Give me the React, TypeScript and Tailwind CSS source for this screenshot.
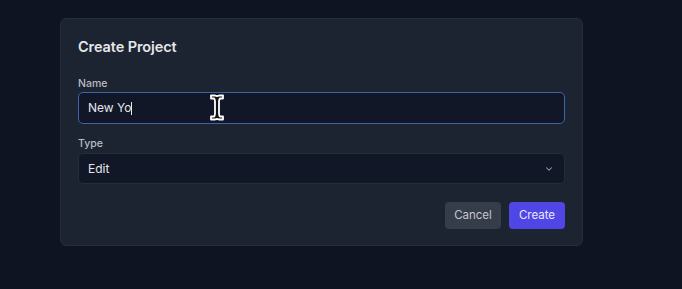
import React from "react";

export default function App() {
  return (
    <div className="w-[682px] h-[289px] bg-[#0e1421] overflow-hidden" style={{ fontFamily: "Inter, 'Noto Sans', sans-serif" }}>
      <div className="ml-[60px] mt-[18px] w-[523px] h-[228px] rounded-[6px] bg-[#1d2431] border border-[#262d3a] px-[17px] pt-[19px]">
        <h2 className="text-[14.5px] font-semibold text-[#e5e7eb] leading-[18px] tracking-[-0.1px]">Create Project</h2>
        <div className="mt-[21px]">
          <label className="block text-[10.5px] font-medium text-[#b7bcc6] leading-[13px]">Name</label>
          <div className="relative mt-[2px] h-[32px] rounded-[5px] border-[1.5px] border-[#4063a8] bg-[#111726] flex items-center pl-[9px]">
            <span className="text-[12px] text-[#e5e7eb]">New Yo</span>
            <span className="w-[1px] h-[13px] bg-[#e5e7eb]" />
            <svg className="absolute left-[130px] top-[0px]" width="16" height="29" viewBox="0 0 16 28">
              <path d="M2 2 H6 Q8 3 10 2 H14 V5 H11 Q10 6 10 8 V20 Q10 22 11 23 H14 V26 H10 Q8 25 6 26 H2 V23 H5 Q6 22 6 20 V8 Q6 6 5 5 H2 Z" fill="#111" stroke="#fff" strokeWidth="1.8" strokeLinejoin="round" />
            </svg>
          </div>
        </div>
        <div className="mt-[13px]">
          <label className="block text-[10.5px] font-medium text-[#b7bcc6] leading-[13px]">Type</label>
          <div className="mt-[3px] h-[31px] rounded-[5px] border border-[#252c3a] bg-[#111726] flex items-center justify-between pl-[9px] pr-[10px]">
            <span className="text-[12px] text-[#e5e7eb]">Edit</span>
            <svg width="10" height="10" viewBox="0 0 24 24" fill="none" stroke="#9ca3af" strokeWidth="2.5" strokeLinecap="round" strokeLinejoin="round">
              <path d="M6 9l6 6 6-6" />
            </svg>
          </div>
        </div>
        <div className="mt-[18px] flex justify-end gap-[8px]">
          <button className="w-[56px] h-[27px] rounded-[4px] bg-[#353c4a] text-[11.5px] text-[#c3c7cf]">Cancel</button>
          <button className="w-[56px] h-[27px] rounded-[4px] bg-[#5046e5] text-[11.5px] text-[#e8e8ff]">Create</button>
        </div>
      </div>
    </div>
  );
}
